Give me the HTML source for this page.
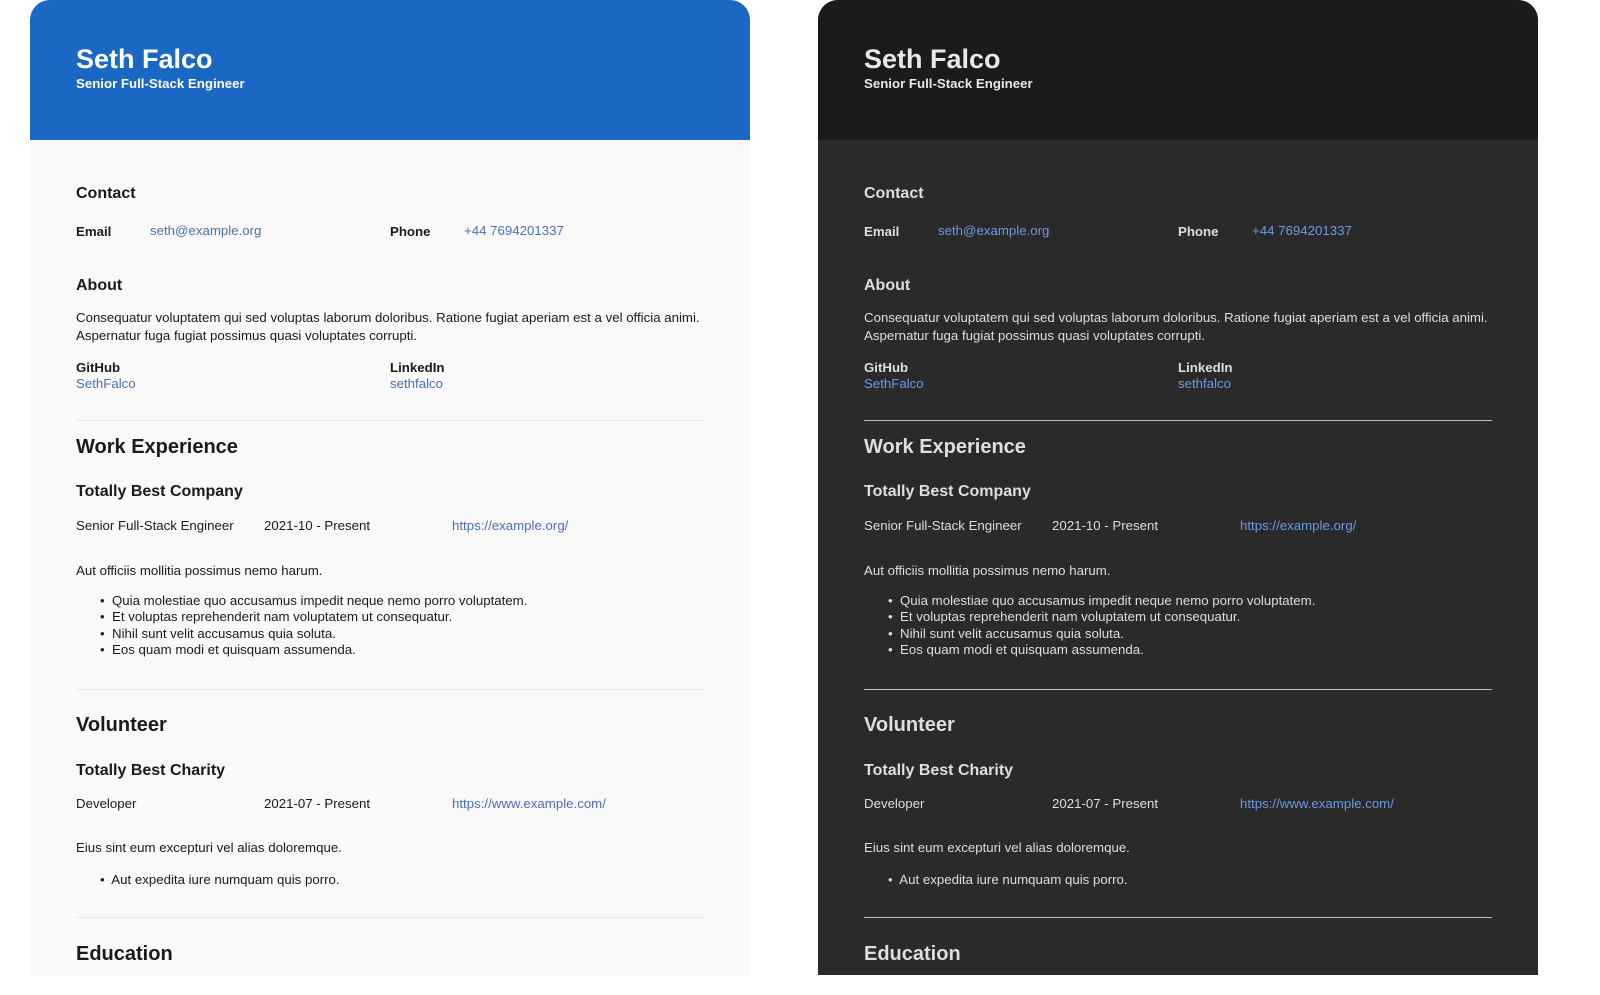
<!DOCTYPE html>
<html><head><meta charset="utf-8"><style>
*{margin:0;padding:0;box-sizing:border-box}
body{width:1600px;height:995px;background:#fff;font-family:"Liberation Sans",Arial,sans-serif;position:relative;overflow:hidden}
.p{position:absolute;top:0;width:720px;height:975px;border-radius:20px 20px 0 0;overflow:hidden}
.l{left:30px;background:#f9f9f9;color:#1a1a1a}
.d{left:818px;background:#2a2a2a;color:#dedede}
.hd{position:absolute;left:0;top:0;width:720px;height:140px}
.l .hd{background:#1a67c4;color:#fff}
.d .hd{background:#1b1b1b;color:#e8e8e8}
.t{position:absolute;white-space:nowrap;line-height:20px;font-size:13.25px}
.b{font-weight:bold}
.a{color:#4a6fb5}
.d .a{color:#6b9be0}
.hr{position:absolute;left:46px;width:628px;height:1px}
.l .hr{background:#e8e8e8}
.d .hr{background:#bdbdbd}
.h1{font-size:27px;font-weight:bold;line-height:32px}
.h2{font-size:16px;font-weight:bold}
.h3{font-size:20px;font-weight:bold;line-height:24px}
</style></head><body>
<div class="p l">
<div class="hd"><div class="t h1" style="left:46px;top:43px">Seth Falco</div><div class="t b" style="left:46px;top:74px">Senior Full-Stack Engineer</div></div>
<div class="t h2" style="left:46px;top:184px">Contact</div>
<div class="t b" style="left:46px;top:222px">Email</div><div class="t a" style="left:120px;top:221px">seth@example.org</div>
<div class="t b" style="left:360px;top:222px">Phone</div><div class="t a" style="left:434px;top:221px">+44 7694201337</div>
<div class="t h2" style="left:46px;top:276px">About</div>
<div class="t" style="left:46px;top:309px;line-height:18px">Consequatur voluptatem qui sed voluptas laborum doloribus. Ratione fugiat aperiam est a vel officia animi.<br>Aspernatur fuga fugiat possimus quasi voluptates corrupti.</div>
<div class="t b" style="left:46px;top:358px">GitHub</div><div class="t a" style="left:46px;top:374px">SethFalco</div>
<div class="t b" style="left:360px;top:358px">LinkedIn</div><div class="t a" style="left:360px;top:374px">sethfalco</div>
<div class="hr" style="top:420px"></div>
<div class="t h3" style="left:46px;top:435px">Work Experience</div>
<div class="t h2" style="left:46px;top:482px">Totally Best Company</div>
<div class="t" style="left:46px;top:516px">Senior Full-Stack Engineer</div><div class="t" style="left:234px;top:516px">2021-10 - Present</div><div class="t a" style="left:422px;top:516px">https://example.org/</div>
<div class="t" style="left:46px;top:561px">Aut officiis mollitia possimus nemo harum.</div>
<div class="t" style="left:70px;top:593px;line-height:16.3px">•&nbsp; Quia molestiae quo accusamus impedit neque nemo porro voluptatem.<br>•&nbsp; Et voluptas reprehenderit nam voluptatem ut consequatur.<br>•&nbsp; Nihil sunt velit accusamus quia soluta.<br>•&nbsp; Eos quam modi et quisquam assumenda.</div>
<div class="hr" style="top:689px"></div>
<div class="t h3" style="left:46px;top:713px">Volunteer</div>
<div class="t h2" style="left:46px;top:761px">Totally Best Charity</div>
<div class="t" style="left:46px;top:794px">Developer</div><div class="t" style="left:234px;top:794px">2021-07 - Present</div><div class="t a" style="left:422px;top:794px">https://www.example.com/</div>
<div class="t" style="left:46px;top:838px">Eius sint eum excepturi vel alias doloremque.</div>
<div class="t" style="left:70px;top:870px">•&nbsp; Aut expedita iure numquam quis porro.</div>
<div class="hr" style="top:917px"></div>
<div class="t h3" style="left:46px;top:942px">Education</div>
</div>
<div class="p d">
<div class="hd"><div class="t h1" style="left:46px;top:43px">Seth Falco</div><div class="t b" style="left:46px;top:74px">Senior Full-Stack Engineer</div></div>
<div class="t h2" style="left:46px;top:184px">Contact</div>
<div class="t b" style="left:46px;top:222px">Email</div><div class="t a" style="left:120px;top:221px">seth@example.org</div>
<div class="t b" style="left:360px;top:222px">Phone</div><div class="t a" style="left:434px;top:221px">+44 7694201337</div>
<div class="t h2" style="left:46px;top:276px">About</div>
<div class="t" style="left:46px;top:309px;line-height:18px">Consequatur voluptatem qui sed voluptas laborum doloribus. Ratione fugiat aperiam est a vel officia animi.<br>Aspernatur fuga fugiat possimus quasi voluptates corrupti.</div>
<div class="t b" style="left:46px;top:358px">GitHub</div><div class="t a" style="left:46px;top:374px">SethFalco</div>
<div class="t b" style="left:360px;top:358px">LinkedIn</div><div class="t a" style="left:360px;top:374px">sethfalco</div>
<div class="hr" style="top:420px"></div>
<div class="t h3" style="left:46px;top:435px">Work Experience</div>
<div class="t h2" style="left:46px;top:482px">Totally Best Company</div>
<div class="t" style="left:46px;top:516px">Senior Full-Stack Engineer</div><div class="t" style="left:234px;top:516px">2021-10 - Present</div><div class="t a" style="left:422px;top:516px">https://example.org/</div>
<div class="t" style="left:46px;top:561px">Aut officiis mollitia possimus nemo harum.</div>
<div class="t" style="left:70px;top:593px;line-height:16.3px">•&nbsp; Quia molestiae quo accusamus impedit neque nemo porro voluptatem.<br>•&nbsp; Et voluptas reprehenderit nam voluptatem ut consequatur.<br>•&nbsp; Nihil sunt velit accusamus quia soluta.<br>•&nbsp; Eos quam modi et quisquam assumenda.</div>
<div class="hr" style="top:689px"></div>
<div class="t h3" style="left:46px;top:713px">Volunteer</div>
<div class="t h2" style="left:46px;top:761px">Totally Best Charity</div>
<div class="t" style="left:46px;top:794px">Developer</div><div class="t" style="left:234px;top:794px">2021-07 - Present</div><div class="t a" style="left:422px;top:794px">https://www.example.com/</div>
<div class="t" style="left:46px;top:838px">Eius sint eum excepturi vel alias doloremque.</div>
<div class="t" style="left:70px;top:870px">•&nbsp; Aut expedita iure numquam quis porro.</div>
<div class="hr" style="top:917px"></div>
<div class="t h3" style="left:46px;top:942px">Education</div>
</div>
</body></html>
